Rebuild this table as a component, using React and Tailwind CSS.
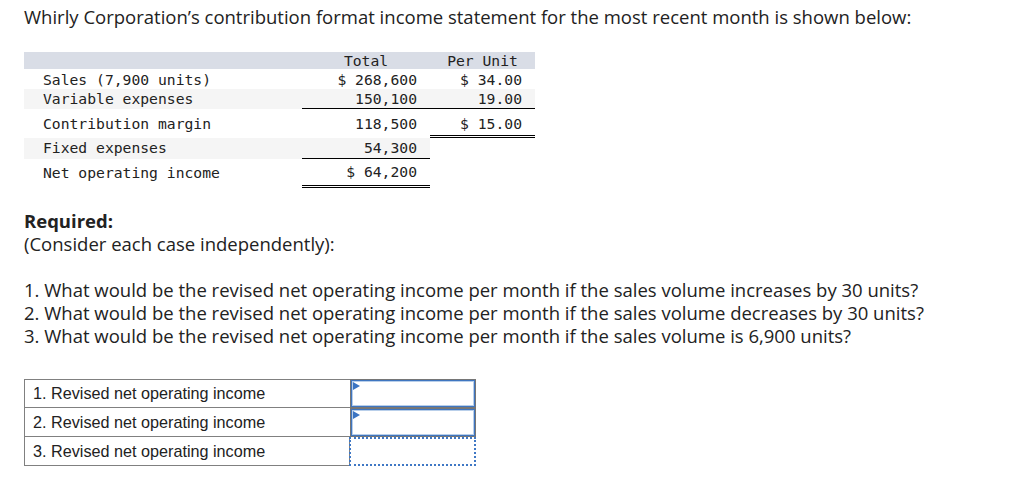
import React from "react";

const mono = { fontFamily: '"DejaVu Sans Mono", "Liberation Mono", monospace' };

function InputCell() {
  return (
    <div className="relative border border-[#767676] p-0">
      <div className="h-full border border-[#3f76c0]">
        <div className="h-full border border-[#b9cfea]"></div>
      </div>
      <svg className="absolute left-[2px] top-[2px]" width="8" height="10" viewBox="0 0 8 10">
        <polygon points="0,0 7,4 0,8" fill="#3b74c2" />
      </svg>
    </div>
  );
}

function Num({ children, line, lead }) {
  return (
    <div className="flex flex-col">
      <div className={`flex-1 text-right pr-[13px] ${lead}`}>{children}</div>
      {line === "single" && <div className="h-[1px] bg-black"></div>}
      {line === "double" && <div className="h-[3px] border-y border-black"></div>}
    </div>
  );
}

export default function App() {
  return (
    <div className="w-[1036px] h-[482px] bg-white text-[#222] pl-6 pt-[5px]" style={{ fontFamily: '"Open Sans", Lato, sans-serif' }}>
      <div className="text-[18.5px] leading-[24px]">
        Whirly Corporation’s contribution format income statement for the most recent month is shown below:
      </div>

      <div className="mt-[23px] w-[511px] text-[14.7px] text-[#222]" style={mono}>
        <div className="grid grid-cols-[278px_128px_105px] h-[17px] bg-[#d9dde6] leading-[17px]">
          <div></div>
          <div className="text-center">Total</div>
          <div className="text-center">Per Unit</div>
        </div>
        <div className="grid grid-cols-[278px_128px_105px] h-[20px] leading-[21px]">
          <div className="pl-[19px]">Sales (7,900 units)</div>
          <div className="text-right pr-[13px]">$ 268,600</div>
          <div className="text-right pr-[13px]">$ 34.00</div>
        </div>
        <div className="grid grid-cols-[278px_128px_105px] h-[20px] bg-[#f5f5f5]">
          <div className="pl-[19px] leading-[20px]">Variable expenses</div>
          <Num line="single" lead="leading-[19px]">150,100</Num>
          <Num line="single" lead="leading-[19px]">19.00</Num>
        </div>
        <div className="grid grid-cols-[278px_128px_105px] h-[29px]">
          <div className="pl-[19px] leading-[28px] pt-[1px]">Contribution margin</div>
          <Num lead="leading-[28px] pt-[1px]">118,500</Num>
          <Num line="double" lead="leading-[23px] pt-[3px]">$ 15.00</Num>
        </div>
        <div className="grid grid-cols-[278px_128px_105px] h-[21px] bg-[#f5f5f5]">
          <div className="pl-[19px] leading-[20px]">Fixed expenses</div>
          <Num line="single" lead="leading-[20px]">54,300</Num>
          <div className="bg-white"></div>
        </div>
        <div className="grid grid-cols-[278px_128px_105px] h-[29px]">
          <div className="pl-[19px] leading-[28px]">Net operating income</div>
          <Num line="double" lead="leading-[26px]">$ 64,200</Num>
          <div></div>
        </div>
      </div>

      <div className="mt-[21px] text-[18.5px] leading-[23px]">
        <div className="font-bold">Required:</div>
        <div>(Consider each case independently):</div>
        <div className="h-[23px]"></div>
        <div>1. What would be the revised net operating income per month if the sales volume increases by 30 units?</div>
        <div>2. What would be the revised net operating income per month if the sales volume decreases by 30 units?</div>
        <div>3. What would be the revised net operating income per month if the sales volume is 6,900 units?</div>
      </div>

      <div
        className="mt-[32px] grid grid-cols-[326px_126px] grid-rows-[29px_29px_29px] w-[452px] text-[16.2px] text-[#222]"
        style={{ fontFamily: '"Liberation Sans", Arial, sans-serif' }}
      >
        <div className="border border-[#808080] border-r-0 pl-[8px] flex items-center">1. Revised net operating income</div>
        <InputCell />
        <div className="border border-[#808080] border-t-0 border-r-0 pl-[8px] flex items-center">2. Revised net operating income</div>
        <InputCell />
        <div className="border border-[#808080] border-t-0 pl-[8px] flex items-center">3. Revised net operating income</div>
        <div className="border-2 border-dotted border-[#3f78c5] -ml-[1px]"></div>
      </div>
    </div>
  );
}
